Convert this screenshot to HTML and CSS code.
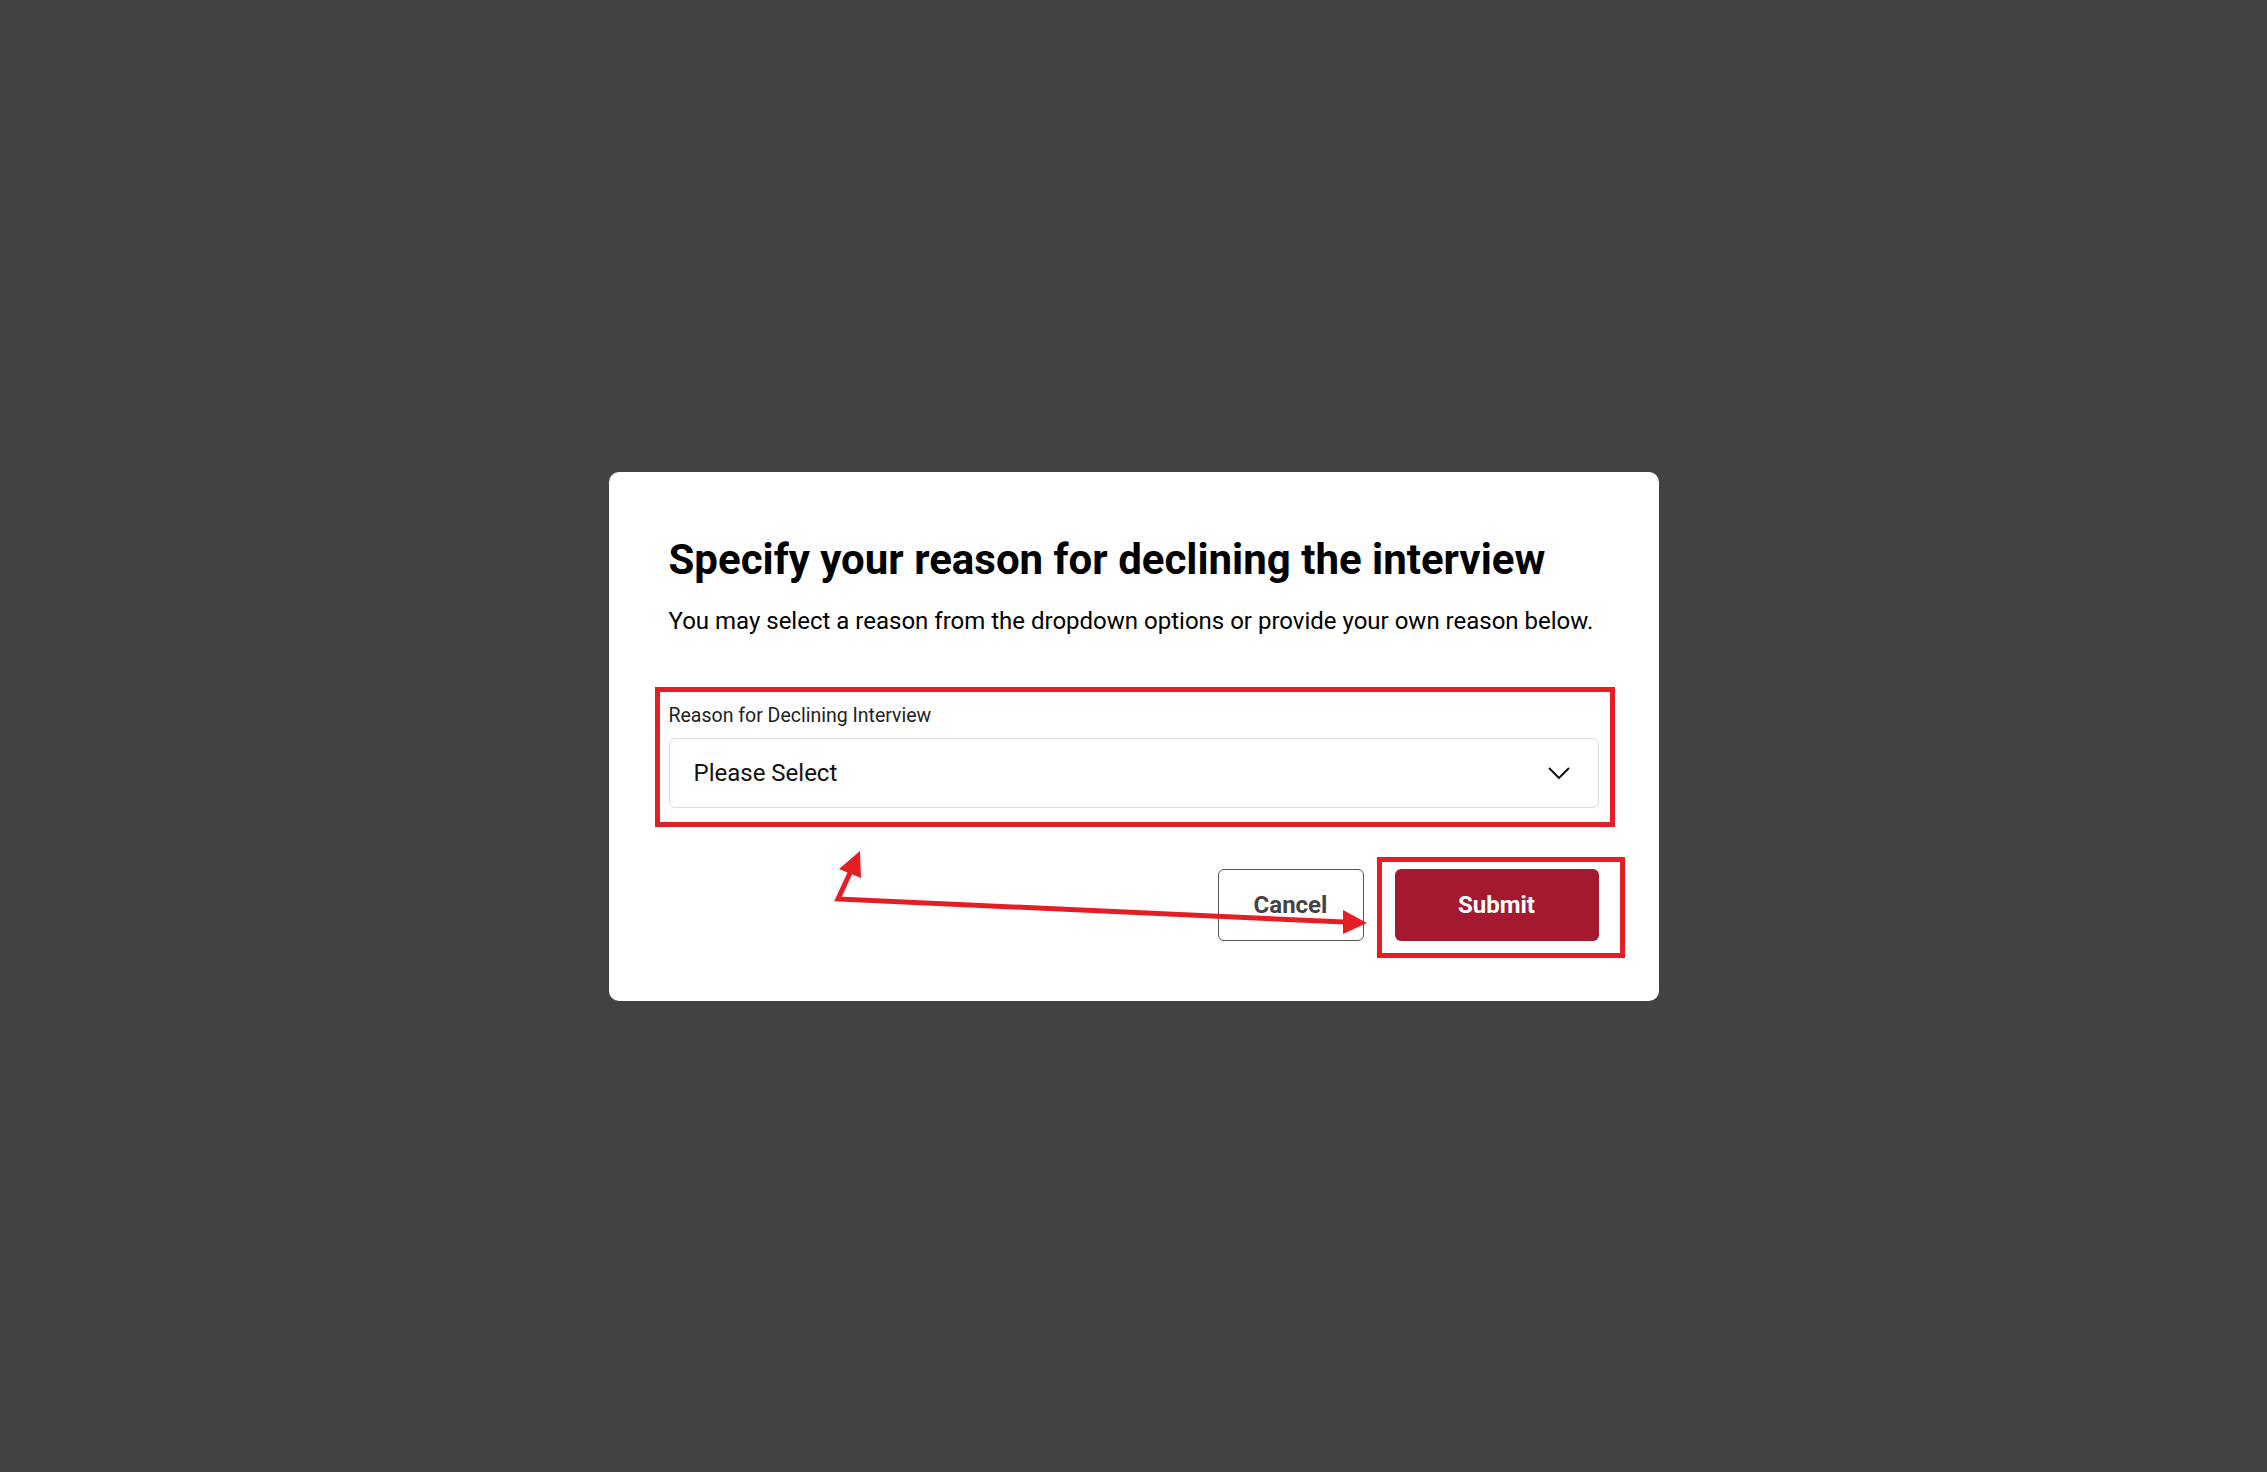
FILE: index.html
```html
<!DOCTYPE html>
<html lang="en">
<head>
    <meta charset="UTF-8">
    <meta name="viewport" content="width=device-width, initial-scale=1.0">
    <title>Decline Interview</title>
    <link rel="stylesheet" href="styles.css">
</head>
<body>
    <div class="modal">
        <h2>Specify your reason for declining the interview</h2>
        <p class="intro">You may select a reason from the dropdown options or provide your own reason below.</p>

        <div class="field marked">
            <label for="reason">Reason for Declining Interview</label>
            <div class="select">
                <span>Please Select</span>
                <svg width="22" height="12" viewBox="0 0 22 12"><path d="M1 1 L11 11 L21 1" fill="none" stroke="#111" stroke-width="2"/></svg>
            </div>
        </div>

        <div class="actions">
            <button class="cancel">Cancel</button>
            <button class="submit marked">Submit</button>
        </div>

        <!-- annotation arrows -->
        <svg class="arrows" width="1050" height="529" viewBox="0 0 1050 529">
            <polyline points="241,401 229,427 735,450" fill="none" stroke="#e41e25" stroke-width="5" stroke-linejoin="miter"/>
            <polygon points="251,379 230,397 252,406" fill="#e41e25"/>
            <polygon points="758,451 734,438 734,462" fill="#e41e25"/>
        </svg>
    </div>
</body>
</html>
```
FILE: styles.css
```css
body {
    margin: 0;
    background: #424242;
    display: flex;
    justify-content: center;
    align-items: center;
    height: 100vh;
    font-family: Roboto, "Liberation Sans", sans-serif;
}
.modal {
    position: relative;
    background: #fff;
    border-radius: 10px;
    width: 930px;
    padding: 63px 60px 60px 60px;
}
h2 {
    margin: 0;
    font-size: 42px;
    line-height: 50px;
    font-weight: 700;
    color: #000;
}
.intro {
    margin: 18px 0 0;
    font-size: 24px;
    line-height: 36px;
    color: #000;
}
.field {
    margin-top: 65px;
    position: relative;
}
label {
    display: block;
    font-size: 19.5px;
    line-height: 24px;
    color: #222;
    margin-bottom: 10px;
}
.select {
    height: 70px;
    box-sizing: border-box;
    border: 1.5px solid #dcdcdc;
    border-radius: 6px;
    display: flex;
    align-items: center;
    justify-content: space-between;
    padding: 0 28px 0 24px;
    font-size: 24px;
    color: #111;
}
.actions {
    display: flex;
    justify-content: flex-end;
    gap: 31px;
    margin-top: 61px;
}
button {
    height: 72px;
    border-radius: 6px;
    font-family: Roboto, "Liberation Sans", sans-serif;
    font-size: 24px;
    font-weight: 700;
}
.cancel {
    width: 146px;
    background: #fff;
    border: 1.5px solid #555;
    color: #444;
}
.submit {
    width: 204px;
    background: #a51930;
    border: none;
    color: #fff;
    position: relative;
}
.marked::after {
    content: '';
    position: absolute;
    border: 5px solid #e41e25;
    pointer-events: none;
}
.field.marked::after {
    left: -14px;
    right: -16px;
    top: -17px;
    bottom: -19px;
}
.submit.marked::after {
    left: -18px;
    right: -26px;
    top: -12px;
    bottom: -17px;
}
.arrows {
    position: absolute;
    left: 0;
    top: 0;
    pointer-events: none;
}
```
